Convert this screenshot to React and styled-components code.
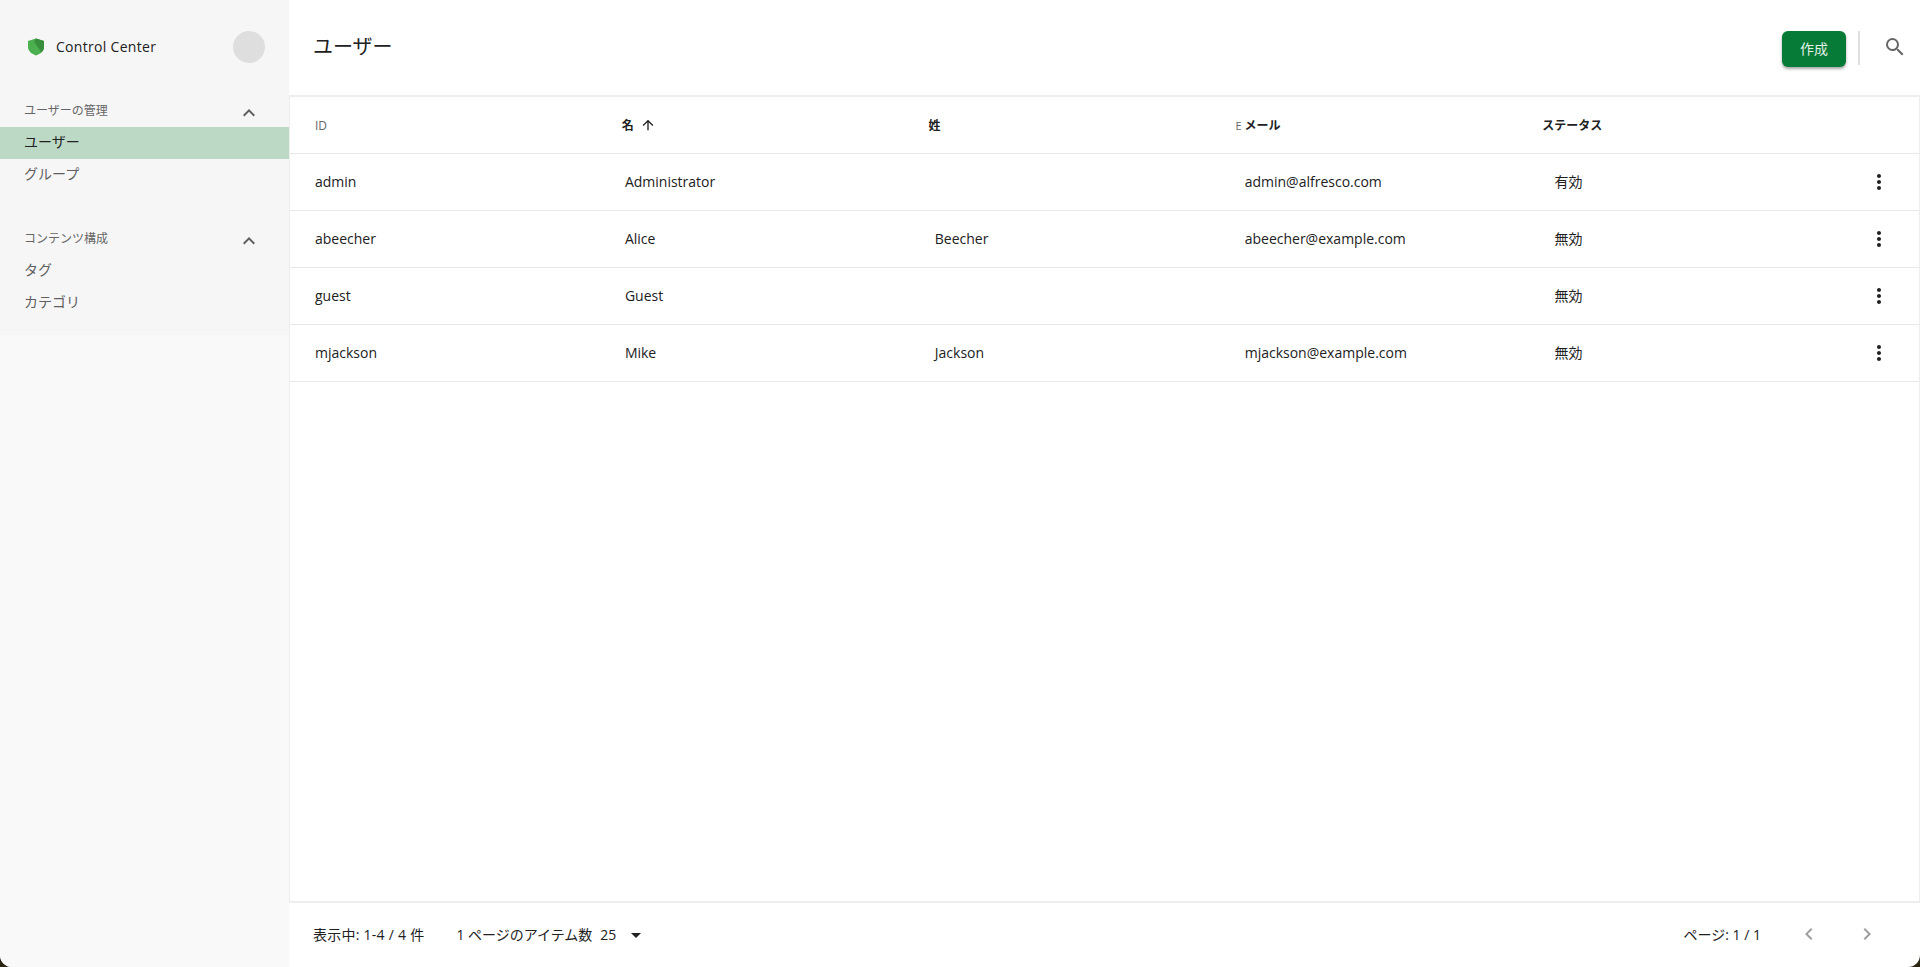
import React from "react";
import styled, { createGlobalStyle } from "styled-components";
import { MdExpandLess, MdChevronLeft, MdChevronRight, MdArrowUpward, MdMoreVert, MdSearch } from "react-icons/md";

const users = [
    { id: "admin", first: "Administrator", last: "", email: "admin@alfresco.com", status: "有効" },
    { id: "abeecher", first: "Alice", last: "Beecher", email: "abeecher@example.com", status: "無効" },
    { id: "guest", first: "Guest", last: "", email: "", status: "無効" },
    { id: "mjackson", first: "Mike", last: "Jackson", email: "mjackson@example.com", status: "無効" },
]

const GlobalStyle = createGlobalStyle`
    html, body {
        margin: 0;
        padding: 0;
        height: 100%;
        background: #2b2412;
    }
    body {
        font-family: "Open Sans", "Noto Sans CJK JP", sans-serif;
        color: #212121;
    }
`

const Shell = styled.div`
    display: flex;
    width: 1920px;
    height: 967px;
    overflow: hidden;
    background: #fff;
    border-radius: 0 0 12px 12px;
`

const Sidebar = styled.aside`
    width: 289px;
    flex: none;
    background: #f9f9f9;
`

const SidebarTop = styled.div`
    background: #f6f6f6;
    height: 335px;
`

const Brand = styled.div`
    display: flex;
    align-items: center;
    height: 94px;
    margin-bottom: 1px;
    padding: 0 24px 0 27px;
`

const BrandName = styled.span`
    margin: 0 0 2px 11px;
    flex: 1;
    font-size: 14px;
    letter-spacing: 0.3px;
`

const Avatar = styled.div`
    width: 32px;
    height: 32px;
    border-radius: 50%;
    background: #dedede;
`

const Section = styled.div`
    margin-bottom: 32px;
`

const SectionHead = styled.div`
    display: flex;
    align-items: center;
    justify-content: space-between;
    box-sizing: border-box;
    height: 32px;
    padding: 0 28px 2px 24px;
    font-size: 12px;
    color: #666;

    svg {
        margin-top: 6px;
    }
`

const NavItem = styled.div`
    display: flex;
    align-items: center;
    box-sizing: border-box;
    height: 32px;
    padding: 0 0 4px 24px;
    font-size: 14px;
    color: ${(props) => (props.$active ? "#212121" : "#5f5f5f")};
    background: ${(props) => (props.$active ? "#bcd9c6" : "transparent")};
`

const Main = styled.main`
    flex: 1;
    min-width: 0;
    display: flex;
    flex-direction: column;
`

const Header = styled.header`
    display: flex;
    align-items: flex-start;
    height: 95px;
    padding: 0 13px 0 24px;
    border-bottom: 2px solid #eeeeee;
`

const Title = styled.h1`
    flex: 1;
    margin: 34px 0 0;
    font-size: 20px;
    font-weight: 400;
    line-height: 26px;
`

const CreateButton = styled.button`
    width: 64px;
    height: 36px;
    margin-top: 31px;
    padding: 0 0 3px;
    border: 0;
    border-radius: 6px;
    background: #067a37;
    color: #e4f0e8;
    font-family: inherit;
    font-size: 14px;
    box-shadow: 0 2px 3px rgba(0, 0, 0, 0.35);
`

const Divider = styled.div`
    width: 2px;
    height: 34px;
    margin: 31px 23px 0 12px;
    background: #e0e0e0;
`

const SearchButton = styled.span`
    display: flex;
    margin-top: 35px;
    color: #666;
`

const TableArea = styled.div`
    flex: 1;
    border-left: 1px solid #eeeeee;
    border-right: 1px solid #eeeeee;
`

const HeadRow = styled.div`
    display: grid;
    grid-template-columns: repeat(5, 306.8px) 1fr;
    align-items: center;
    height: 56px;
    padding-left: 25px;
    border-bottom: 1px solid #e8e8e8;
    font-size: 12px;
`

const HeadCell = styled.div`
    display: flex;
    align-items: center;
    gap: 6px;
    font-weight: ${(props) => (props.$muted ? 400 : 700)};
    color: ${(props) => (props.$muted ? "#666" : "#212121")};
`

const MutedLetter = styled.span`
    margin-right: -3px;
    font-size: 11px;
    font-weight: 400;
    color: #666;
`

const Row = styled.div`
    display: grid;
    grid-template-columns: repeat(5, 309.9px) 1fr;
    align-items: center;
    height: 56px;
    padding-left: 25px;
    border-bottom: 1px solid #e8e8e8;
    font-size: 14px;
`

const Cell = styled.div`
    padding-bottom: 2px;
`

const Actions = styled.div`
    display: flex;
    justify-content: flex-end;
    padding-right: 28px;
`

const Footer = styled.footer`
    display: flex;
    align-items: center;
    box-sizing: border-box;
    height: 66px;
    padding: 0 41px 2px 24px;
    border-top: 2px solid #eeeeee;
    font-size: 14px;
`

const Showing = styled.span`
    letter-spacing: 0.25px;
`

const PageSize = styled.div`
    display: flex;
    align-items: center;
    flex: 1;
    margin-left: 32px;
`

const SizeValue = styled.span`
    margin-left: 8px;
`

const Caret = styled.span`
    width: 0;
    height: 0;
    margin: 2px 0 0 15px;
    border-left: 5px solid transparent;
    border-right: 5px solid transparent;
    border-top: 5px solid #212121;
`

const Pager = styled.div`
    display: flex;
    align-items: center;
    color: #9e9e9e;
`

const PagerText = styled.span`
    margin-right: 36px;
    color: #212121;
`

const PagerButton = styled.span`
    display: flex;
    margin-left: ${(props) => (props.$next ? "34px" : "0")};
`

const Shield = () => (
    <svg width="18" height="18" viewBox="0 0 18 18">
        <path d="M9 .5 L17 3 V9 C17 13 13.500 16 9 17.500 C4.500 16 1 13 1 9 V3 Z" fill="#4caf50" />
        <path d="M9 .5 L17 3 V9 C17 11 16 13 14.500 14.500 L7 3.500 Z" fill="#388e3c" />
    </svg>
)

const NavSection = ({ title, items, active }) => (
    <Section>
        <SectionHead>
            {title}
            <MdExpandLess size={24} color="#5f5f5f" />
        </SectionHead>
        { items.map((item) => (
            <NavItem key={item} $active={item === active}>{item}</NavItem>
        )) }
    </Section>
)

const App = () => {
    return (
        <>
            <GlobalStyle />
            <Shell>
                <Sidebar>
                    <SidebarTop>
                        <Brand>
                            <Shield />
                            <BrandName>Control Center</BrandName>
                            <Avatar />
                        </Brand>
                        <NavSection title="ユーザーの管理" items={["ユーザー", "グループ"]} active="ユーザー" />
                        <NavSection title="コンテンツ構成" items={["タグ", "カテゴリ"]} />
                    </SidebarTop>
                </Sidebar>
                <Main>
                    <Header>
                        <Title>ユーザー</Title>
                        <CreateButton>作成</CreateButton>
                        <Divider />
                        <SearchButton><MdSearch size={24} /></SearchButton>
                    </Header>
                    <TableArea>
                        <HeadRow>
                            <HeadCell $muted>ID</HeadCell>
                            <HeadCell>名 <MdArrowUpward size={16} /></HeadCell>
                            <HeadCell>姓</HeadCell>
                            <HeadCell><MutedLetter>E</MutedLetter>メール</HeadCell>
                            <HeadCell>ステータス</HeadCell>
                        </HeadRow>
                        { users.map((user) => (
                            <Row key={user.id}>
                                <Cell>{user.id}</Cell>
                                <Cell>{user.first}</Cell>
                                <Cell>{user.last}</Cell>
                                <Cell>{user.email}</Cell>
                                <Cell>{user.status}</Cell>
                                <Actions><MdMoreVert size={24} /></Actions>
                            </Row>
                        )) }
                    </TableArea>
                    <Footer>
                        <Showing>表示中: 1-4 / 4 件</Showing>
                        <PageSize>
                            1 ページのアイテム数
                            <SizeValue>25</SizeValue>
                            <Caret />
                        </PageSize>
                        <Pager>
                            <PagerText>ページ: 1 / 1</PagerText>
                            <PagerButton><MdChevronLeft size={24} /></PagerButton>
                            <PagerButton $next><MdChevronRight size={24} /></PagerButton>
                        </Pager>
                    </Footer>
                </Main>
            </Shell>
        </>
    )
}

export default App
